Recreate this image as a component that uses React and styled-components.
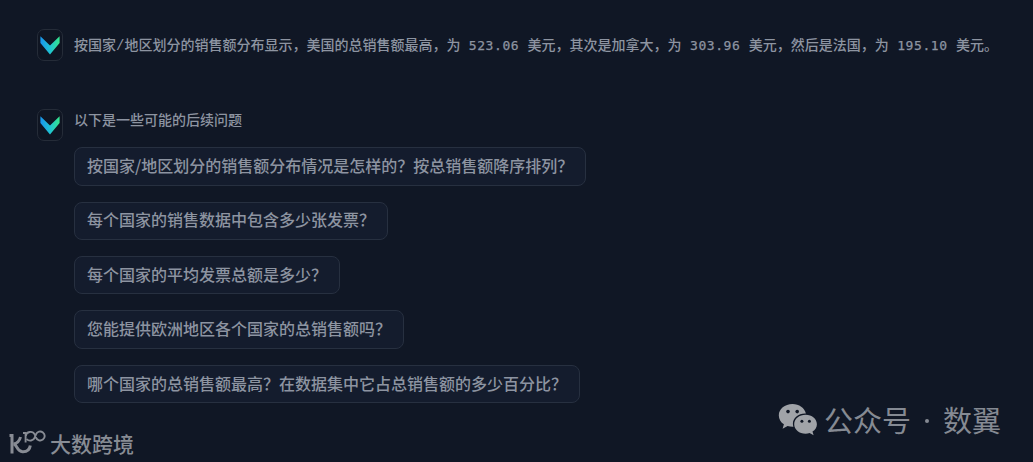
import React from 'react'
import styled, { createGlobalStyle } from 'styled-components'

const GlobalStyle = createGlobalStyle`
  * {
    box-sizing: border-box;
  }
  body {
    margin: 0;
    background-color: #101725;
    font-family: 'Liberation Sans', 'Noto Sans CJK SC', sans-serif;
  }
`
const Container = styled.main`
  position: relative;
  height: 462px;
  padding: 29px 36px 0 37px;
  overflow: hidden;
  background-color: #101725;
  color: #8d94a1;
`
const Message = styled.section`
  display: flex;
  align-items: flex-start;
  gap: 11px;
  margin-bottom: ${({ $last }) => ($last ? '0' : '48px')};
`
const Avatar = styled.div`
  display: flex;
  flex-shrink: 0;
  width: 26px;
  height: 32px;
  padding: 6px 2px 0;
  border: 1px solid #252c38;
  border-radius: 7px;
  background-color: #0f1522;
`
const Body = styled.div`
  display: flex;
  flex-direction: column;
  align-items: flex-start;
`
const Text = styled.p`
  margin: ${({ $top }) => $top}px 0 0;
  font-family: 'Liberation Mono', 'Noto Sans CJK SC', monospace;
  font-size: 14px;
  font-weight: 500;
  line-height: 20px;
  white-space: nowrap;
`
const Amount = styled.span`
  font-family: 'DejaVu Sans Mono', monospace;
  font-size: 13px;
  letter-spacing: 0.57px;
  -webkit-text-stroke: 0.25px #8d94a1;
`
const Questions = styled.div`
  display: flex;
  flex-direction: column;
  align-items: flex-start;
  gap: 16px;
  margin-top: 16.3px;
`
const Question = styled.button`
  height: 38.4px;
  padding: 0 20px 3px 12px;
  border: 1px solid #273040;
  border-radius: 8px;
  background-color: #141c2d;
  color: #8d94a1;
  font-family: 'Noto Sans CJK SC', sans-serif;
  font-size: 16px;
  font-weight: 500;
  line-height: 24px;
  white-space: nowrap;
  width: ${({ $width }) => $width}px;
  text-align: left;
`
const Watermark = styled.div`
  position: absolute;
  left: 9px;
  top: 428px;
  display: flex;
  align-items: center;
  gap: 4px;
  color: #888c94;
  font-family: 'Noto Sans CJK SC', sans-serif;
  font-size: 21px;
  font-weight: 500;
  line-height: 30px;
  white-space: nowrap;
`
const Account = styled.div`
  position: absolute;
  left: 778px;
  top: 399px;
  display: flex;
  align-items: center;
  gap: 6px;
  color: #858a93;
  font-family: 'Noto Sans CJK SC', sans-serif;
  font-size: 29px;
  font-weight: 400;
  line-height: 40px;
  white-space: nowrap;

  svg {
    margin-top: 2px;
  }
`
const Dot = styled.i`
  display: inline-block;
  width: 4px;
  height: 4px;
  margin: 0 14px 9px 14px;
  border-radius: 50%;
  background-color: #858a93;
`

const Logo = ({ id }) => (
  <Avatar>
    <svg width="20" height="19" viewBox="0 0 20 19">
      <defs>
        <linearGradient id={id} x1="0" y1="0" x2="1" y2="0">
          <stop offset="0" stopColor="#1995ee" />
          <stop offset="0.5" stopColor="#1fc3d3" />
          <stop offset="1" stopColor="#36e68c" />
        </linearGradient>
      </defs>
      <path d="M.4.2 10 9.4 19.6.2V7L10 18.4.4 7Z" fill={`url(#${id})`} />
    </svg>
  </Avatar>
)

const WechatIcon = () => (
  <svg width="40" height="34" viewBox="0 0 40 34">
    <path
      fill="#a0a3a8"
      d="M14.5 1C6.8 1 .8 6 .8 12.4c0 3.6 2 6.8 5.1 8.9L4.6 25.7l5-2.6c1.6.5 3.2.7 5 .7h.8c-.3-1-.5-2-.5-3 0-5.7 5.4-10.2 12.1-10.2h.9C26.7 5 21.1 1 14.5 1Z"
    />
    <path
      fill="#a0a3a8"
      d="M27.6 11.8c-6.3 0-11.4 4.1-11.4 9.4s5.1 9.5 11.4 9.5c1.4 0 2.8-.2 4-.6l4 2.2-1.1-3.7c2.7-1.7 4.4-4.4 4.4-7.4 0-5.3-5-9.4-11.3-9.4Z"
    />
    <g fill="#101725">
      <circle cx="10" cy="8.6" r="1.8" />
      <circle cx="19.2" cy="8.6" r="1.8" />
      <circle cx="23.9" cy="18.3" r="1.5" />
      <circle cx="31.4" cy="18.3" r="1.5" />
    </g>
  </svg>
)

const MarkIcon = () => (
  <svg width="37" height="26" viewBox="0 0 37 26" fill="none" stroke="#888c94">
    <path d="M.5 5.5H3V23.5" strokeWidth="3" />
    <path d="M11.5 7C10.5 11 8 13.5 4.5 14 8.5 14.5 7.5 21.5 13.5 21.8 18 22 20.7 19.5 21.3 15.5" strokeWidth="3" />
    <path d="M14 3H16.6V12.5" strokeWidth="1.9" />
    <path d="M16.8 6A4.7 4.4 0 0 1 25.7 4.4L27 7.6A4.5 4.5 0 1 0 27 4.4L25.7 7.6A4.7 4.4 0 0 1 17.6 9" strokeWidth="1.9" />
  </svg>
)

const questions = [
  { text: '按国家/地区划分的销售额分布情况是怎样的？按总销售额降序排列？', width: 512 },
  { text: '每个国家的销售数据中包含多少张发票？', width: 314 },
  { text: '每个国家的平均发票总额是多少？', width: 266 },
  { text: '您能提供欧洲地区各个国家的总销售额吗？', width: 330 },
  { text: '哪个国家的总销售额最高？在数据集中它占总销售额的多少百分比？', width: 506 },
]

const App = () => {
  return (
    <>
      <GlobalStyle />
      <Container>
        <Message>
          <Logo id="logo-summary" />
          <Text $top={7}>
            按国家/地区划分的销售额分布显示，美国的总销售额最高，为 <Amount>523.06</Amount> 美元，其次是加拿大，为{' '}
            <Amount>303.96</Amount> 美元，然后是法国，为 <Amount>195.10</Amount> 美元。
          </Text>
        </Message>
        <Message $last>
          <Logo id="logo-questions" />
          <Body>
            <Text $top={2}>以下是一些可能的后续问题</Text>
            <Questions>
              {questions.map(({ text, width }) => (
                <Question key={text} $width={width}>{text}</Question>
              ))}
            </Questions>
          </Body>
        </Message>
        <Watermark>
          <MarkIcon />
          <span>大数跨境</span>
        </Watermark>
        <Account>
          <WechatIcon />
          <span>公众号<Dot />数翼</span>
        </Account>
      </Container>
    </>
  )
}

export default App
